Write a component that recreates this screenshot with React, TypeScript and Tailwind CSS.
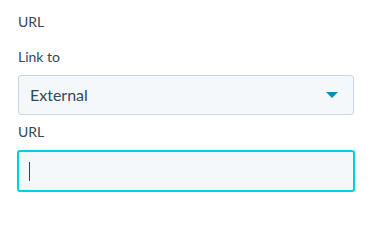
export default function App() {
  return (
    <div className="w-[377px] h-[209px] bg-white text-[#33475b] font-['Lato',_'Noto_Sans',_sans-serif] pl-[18px] pr-[24px] pt-[12px]">
      <div className="text-[14px] leading-[20px]">URL</div>

      <div className="mt-[15px] text-[14px] leading-[20px]">Link to</div>
      <div className="mt-[8px] flex items-center justify-between w-[336px] h-[40px] rounded-[3px] border border-[#cbd6e2] bg-[#f5f8fa] pl-[11px] pr-[15px]">
        <span className="text-[16px] leading-[22px]">External</span>
        <svg width="12" height="6" viewBox="0 0 12 6" aria-hidden="true">
          <path d="M0 0 L12 0 L6 6 Z" fill="#0091ae" />
        </svg>
      </div>

      <div className="mt-[7px] text-[14px] leading-[20px]">URL</div>
      <div className="mt-[8px] -ml-px flex items-center w-[338px] h-[42px] rounded-[3px] border-2 border-[#00d0e4] bg-[#f5f8fa] pl-[10px]">
        <span className="block w-px h-[19px] bg-[#33475b]" />
      </div>
    </div>
  );
}
